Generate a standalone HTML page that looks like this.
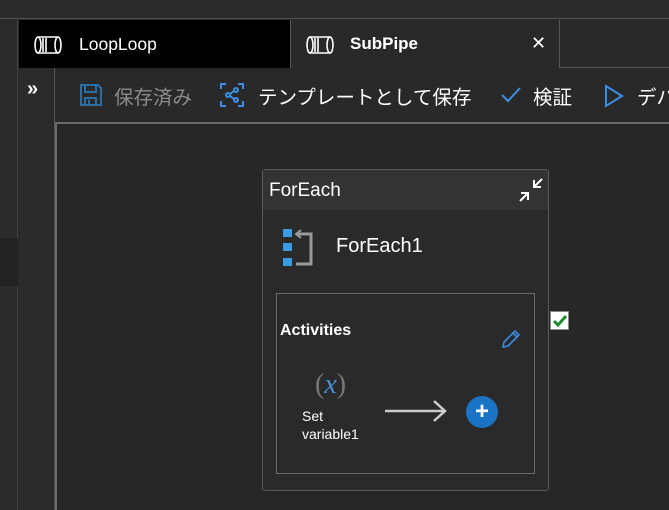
<!DOCTYPE html>
<html><head><meta charset="utf-8"><style>
*{margin:0;padding:0;box-sizing:border-box}
html,body{width:669px;height:510px;overflow:hidden}
body{background:#292929;font-family:"Segoe UI","Liberation Sans","Noto Sans CJK JP",sans-serif;color:#fff;position:relative}
#w{position:absolute;left:0;top:0;width:669px;height:510px;overflow:hidden}
.a{position:absolute;white-space:nowrap}
</style></head><body><div id="w">
<div class="a" style="left:0;top:0;width:669px;height:19px;background:#2b2b2b;border-bottom:1px solid #555"></div>
<div class="a" style="left:0;top:20px;width:18px;height:490px;background:#2b2b2b;border-right:1px solid #444"></div>
<div class="a" style="left:0;top:238px;width:18px;height:48px;background:#222"></div>
<div class="a" style="left:19px;top:20px;width:271px;height:48px;background:#000"></div>
<div class="a" style="left:290px;top:20px;width:270px;height:48px;background:#292929;border-left:1px solid #555;border-right:1px solid #555"></div>
<div class="a" style="left:560px;top:67px;width:109px;height:1px;background:#555"></div>
<svg class="a" style="left:33px;top:35px" width="30" height="20" viewBox="0 0 30 20" fill="none" stroke="#fff" stroke-width="1.6"><ellipse cx="5" cy="10" rx="3" ry="8"/><ellipse cx="25" cy="10" rx="3" ry="8"/><path d="M5 2H25M5 18H25M10 3v14M13 3v14"/></svg>
<div class="a" style="left:79px;top:34px;font-size:17.5px">LoopLoop</div>
<svg class="a" style="left:305px;top:35px" width="30" height="20" viewBox="0 0 30 20" fill="none" stroke="#fff" stroke-width="1.6"><ellipse cx="5" cy="10" rx="3" ry="8"/><ellipse cx="25" cy="10" rx="3" ry="8"/><path d="M5 2H25M5 18H25M10 3v14M13 3v14"/></svg>
<div class="a" style="left:350px;top:34px;font-size:17px;font-weight:bold">SubPipe</div>
<div class="a" style="left:531px;top:33px;font-size:18px">✕</div>
<div class="a" style="left:19px;top:68px;width:36px;height:442px;border-right:1px solid #555;background:#2b2b2b"></div>
<div class="a" style="left:27px;top:78px;font-size:20px;font-weight:bold">»</div>
<svg class="a" style="left:79px;top:83px" width="24" height="24" viewBox="0 0 24 24" fill="none" stroke="#2a6ea8" stroke-width="2"><path d="M2 2H19L22 5V22H2Z"/><path d="M6 2V9H17V2M6 22V15H17V22M10 17v5"/></svg>
<div class="a" style="left:114px;top:81px;font-size:19.5px;color:#8a8a8a">保存済み</div>
<svg class="a" style="left:220px;top:83px" width="24" height="24" viewBox="0 0 24 24" fill="none" stroke="#3b8ee6" stroke-width="2"><path d="M1 6V1H6M18 1H23V6M23 18V23H18M6 23H1V18"/><circle cx="8" cy="12" r="2"/><circle cx="16" cy="7" r="2"/><circle cx="16" cy="17" r="2"/><path d="M10 11L14 8M10 13L14 16"/></svg>
<div class="a" style="left:258px;top:81px;font-size:19.5px">テンプレートとして保存</div>
<svg class="a" style="left:500px;top:85px" width="22" height="20" viewBox="0 0 22 20" fill="none" stroke="#3b8ee6" stroke-width="2"><path d="M2 10L8 16L20 3"/></svg>
<div class="a" style="left:533px;top:81px;font-size:19.5px">検証</div>
<svg class="a" style="left:604px;top:84px" width="20" height="24" viewBox="0 0 20 24" fill="none" stroke="#3b8ee6" stroke-width="2"><path d="M2 2L18 12L2 22Z"/></svg>
<div class="a" style="left:637px;top:81px;font-size:19.5px">デバ</div>
<div class="a" style="left:55px;top:122px;width:614px;height:388px;background:#272727;border-top:2px solid #6a6a6a;border-left:2px solid #6a6a6a"></div>
<div class="a" style="left:262px;top:169px;width:287px;height:322px;background:#2a2a2a;border:1px solid #5a5a5a;border-radius:3px"></div>
<div class="a" style="left:263px;top:170px;width:285px;height:40px;background:#333"></div>
<div class="a" style="left:269px;top:180px;font-size:19px">ForEach</div>
<svg class="a" style="left:517px;top:176px" width="28" height="28" viewBox="0 0 28 28" fill="none" stroke="#fff" stroke-width="2"><path d="M3 25L11 17M4 17H11V24M25 3L17 11M17 4V11H24"/></svg>
<div class="a" style="left:283px;top:229px;width:9px;height:8px;background:#3a9ae0"></div>
<div class="a" style="left:283px;top:243px;width:9px;height:8px;background:#3a9ae0"></div>
<div class="a" style="left:283px;top:258px;width:9px;height:8px;background:#3a9ae0"></div>
<svg class="a" style="left:293px;top:227px" width="22" height="42" viewBox="0 0 22 42" fill="none" stroke="#999" stroke-width="3"><path d="M3 7H18V37H3"/><path d="M8 3L3 7L8 11" stroke-width="2"/></svg>
<div class="a" style="left:336px;top:235px;font-size:20px">ForEach1</div>
<div class="a" style="left:276px;top:293px;width:259px;height:181px;border:1px solid #6a6a6a"></div>
<div class="a" style="left:280px;top:322px;font-size:16px;font-weight:bold">Activities</div>
<svg class="a" style="left:500px;top:328px" width="22" height="22" viewBox="0 0 22 22" fill="none" stroke="#3b8ee6" stroke-width="1.6"><path d="M3 19L4 14L15 3L19 7L8 18Z M13 5L17 9"/></svg>
<div class="a" style="left:315px;top:368px;font-size:28px;line-height:34px;color:#777;font-family:'Liberation Serif',serif">(<i style="color:#4a90d9">x</i>)</div>
<div class="a" style="left:302px;top:407px;font-size:14px;line-height:18px">Set<br>variable1</div>
<svg class="a" style="left:384px;top:398px" width="64" height="26" viewBox="0 0 64 26" fill="none" stroke="#ccc" stroke-width="2.5"><path d="M1 13H61M50 3L61 13L50 23"/></svg>
<div class="a" style="left:466px;top:396px;width:32px;height:32px;border-radius:50%;background:#1a73c4"></div>
<div class="a" style="left:466px;top:396px;width:32px;text-align:center;line-height:31px;font-size:24px;font-weight:bold">+</div>
<div class="a" style="left:550px;top:311px;width:19px;height:19px;background:#fff;border:1px solid #888"></div>
<svg class="a" style="left:552px;top:313px" width="16" height="16" viewBox="0 0 16 16" fill="none" stroke="#1a8a2a" stroke-width="3"><path d="M2 8L6 12L14 3"/></svg>
</div></body></html>
